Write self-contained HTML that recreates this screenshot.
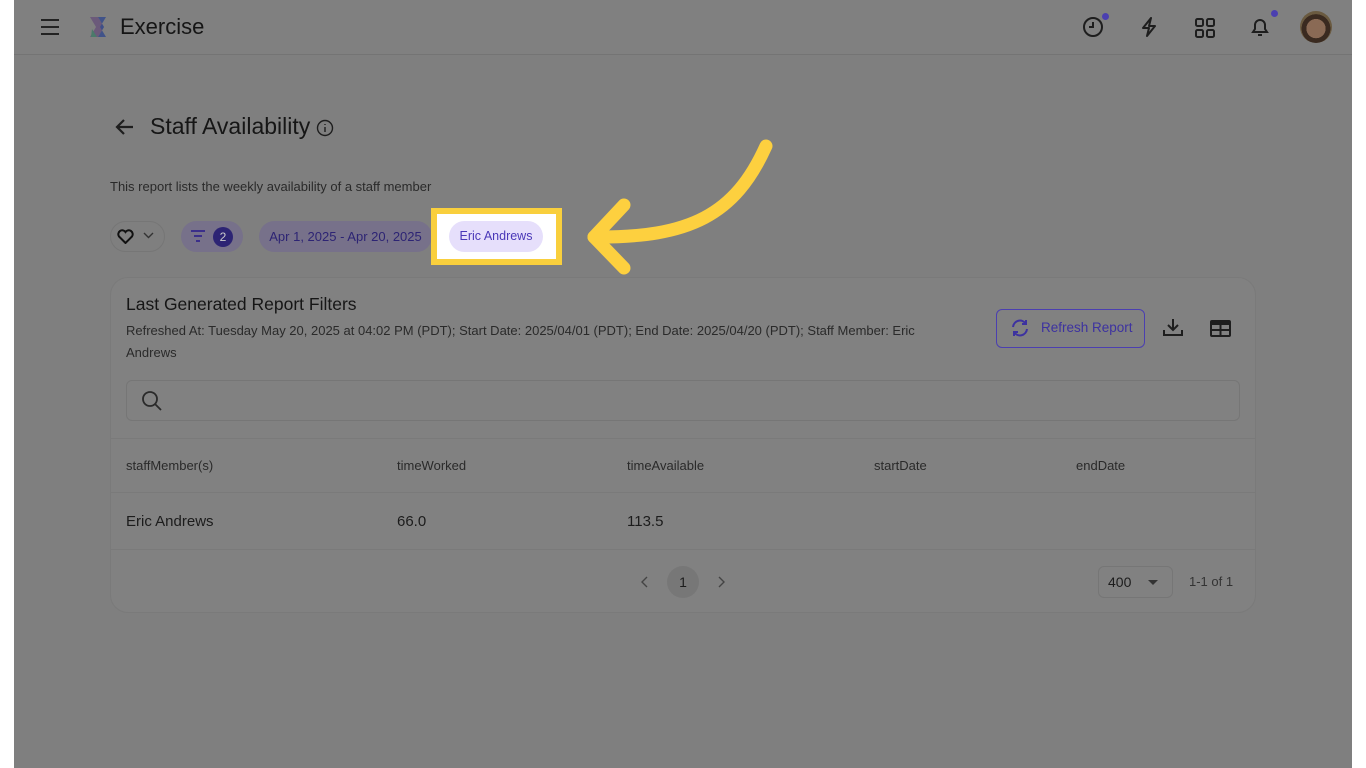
<!DOCTYPE html>
<html><head><meta charset="utf-8"><style>
*{margin:0;padding:0;box-sizing:border-box}
body{width:1366px;height:768px;background:#fff;font-family:"Liberation Sans",sans-serif;position:relative;overflow:hidden;color:#1c1c1c}
.page{position:absolute;left:14px;top:0;width:1338px;height:768px;background:#7f7f7f}
.a{position:absolute}
.top{left:14px;top:0;width:1338px;height:55px;border-bottom:1px solid #747474;background:#808080}
.card{left:110px;top:277px;width:1146px;height:336px;border:1px solid #7a7a7a;border-radius:18px;background:#818181}
.hl{background:#7a7a7a;height:1px}
.t{font-size:13px;color:#2a2a2a}
</style></head><body>
<div class="page"></div>
<div class="a top"></div>
<div class="a" style="left:41px;top:19px;width:18px;height:2px;background:#222"></div>
<div class="a" style="left:41px;top:26px;width:18px;height:2px;background:#222"></div>
<div class="a" style="left:41px;top:33px;width:18px;height:2px;background:#222"></div>
<svg class="a" style="left:88px;top:15px" width="24" height="24" viewBox="0 0 24 24"><path d="M2 2h8l6 10-6 10H2l6-10z" fill="#6b5a7a"/><path d="M10 2h8l-6 10 6 10h-8l6-10z" fill="#3a4e8a" opacity=".9"/><path d="M4 14l5 8h-6z" fill="#4a7a6a"/></svg>
<div class="a" style="left:120px;top:14px;font-size:22px;color:#151515">Exercise</div>
<svg class="a" style="left:1082px;top:16px" width="22" height="22" viewBox="0 0 22 22" fill="none" stroke="#1e1e1e" stroke-width="2"><circle cx="11" cy="11" r="9"/><path d="M11 6v5H7"/></svg>
<div class="a" style="left:1102px;top:13px;width:7px;height:7px;border-radius:50%;background:#4b3fb0"></div>
<svg class="a" style="left:1139px;top:16px" width="20" height="22" viewBox="0 0 20 22" fill="none" stroke="#1e1e1e" stroke-width="2" stroke-linejoin="round"><path d="M12 2L4 12h6l-2 8 8-10h-6z"/></svg>
<svg class="a" style="left:1195px;top:18px" width="20" height="20" viewBox="0 0 20 20" fill="none" stroke="#1e1e1e" stroke-width="2"><rect x="1" y="1" width="7" height="7" rx="1.5"/><rect x="12" y="1" width="7" height="7" rx="1.5"/><rect x="1" y="12" width="7" height="7" rx="1.5"/><rect x="12" y="12" width="7" height="7" rx="1.5"/></svg>
<svg class="a" style="left:1250px;top:16px" width="20" height="22" viewBox="0 0 20 22" fill="none" stroke="#1e1e1e" stroke-width="2"><path d="M3 16h14l-2-3V9a5 5 0 0 0-10 0v4z"/><path d="M8 19h4"/></svg>
<div class="a" style="left:1271px;top:10px;width:7px;height:7px;border-radius:50%;background:#4b3fb0"></div>
<div class="a" style="left:1300px;top:11px;width:32px;height:32px;border-radius:50%;background:radial-gradient(circle at 50% 55%,#8a6a55 0 40%,#3a2a20 41% 60%,#6a5a40 61%)"></div>
<svg class="a" style="left:115px;top:118px" width="20" height="18" viewBox="0 0 20 18" fill="none" stroke="#1e1e1e" stroke-width="2.2"><path d="M18 9H3M9 2L2 9l7 7"/></svg>
<div class="a" style="left:150px;top:113px;font-size:23px;color:#161616">Staff Availability</div>
<svg class="a" style="left:316px;top:119px" width="18" height="18" viewBox="0 0 18 18" fill="none" stroke="#1e1e1e" stroke-width="1.4"><circle cx="9" cy="9" r="7.5"/><path d="M9 8v5M9 5v1"/></svg>
<div class="a t" style="left:110px;top:179px">This report lists the weekly availability of a staff member</div>
<div class="a" style="left:110px;top:221px;width:55px;height:31px;border:1px solid #767676;border-radius:16px"></div>
<svg class="a" style="left:117px;top:229px" width="17" height="15" viewBox="0 0 17 15" fill="none" stroke="#111" stroke-width="2"><path d="M8.5 14L2 7.5A3.5 3.5 0 0 1 8.5 3a3.5 3.5 0 0 1 6.5 4.5z"/></svg>
<svg class="a" style="left:143px;top:232px" width="11" height="7" viewBox="0 0 11 7" fill="none" stroke="#333" stroke-width="1.4"><path d="M1 1l4.5 4.5L10 1"/></svg>
<div class="a" style="left:181px;top:221px;width:62px;height:31px;border-radius:16px;background:#77718a"></div>
<div class="a" style="left:191px;top:230px;width:14px;height:2px;background:#3b2f8a"></div>
<div class="a" style="left:194px;top:235px;width:8px;height:2px;background:#3b2f8a"></div>
<div class="a" style="left:196px;top:240px;width:4px;height:2px;background:#3b2f8a"></div>
<div class="a" style="left:213px;top:227px;width:20px;height:20px;border-radius:50%;background:#2d2474;color:#ccc;font-size:12px;text-align:center;line-height:20px">2</div>
<div class="a" style="left:259px;top:221px;width:173px;height:31px;border-radius:16px;background:#77718a;color:#2d2474;font-size:13px;line-height:31px;text-align:center">Apr 1, 2025 - Apr 20, 2025</div>
<div class="a" style="left:431px;top:208px;width:131px;height:57px;border:6px solid #f9cf3d;background:#fff"></div>
<div class="a" style="left:449px;top:221px;width:94px;height:31px;border-radius:16px;background:#e6dffb;color:#4a38b8;font-size:12.5px;line-height:31px;text-align:center">Eric Andrews</div>
<svg class="a" style="left:575px;top:130px" width="210" height="155" viewBox="575 130 210 155" fill="none" stroke="#fdd03f" stroke-width="13" stroke-linecap="round" stroke-linejoin="round"><path d="M766 146C735 215 690 238 594 237"/><path d="M624 205L594 237L624 268"/></svg>
<div class="a card"></div>
<div class="a" style="left:126px;top:294px;font-size:17.5px;color:#161616">Last Generated Report Filters</div>
<div class="a t" style="left:126px;top:320px;width:840px;line-height:22px">Refreshed At: Tuesday May 20, 2025 at 04:02 PM (PDT); Start Date: 2025/04/01 (PDT); End Date: 2025/04/20 (PDT); Staff Member: Eric Andrews</div>
<div class="a" style="left:996px;top:309px;width:149px;height:39px;border:1.5px solid #4b3fb0;border-radius:6px;color:#3d32a0;font-size:13.5px;line-height:36px;padding-left:44px">Refresh Report</div>
<svg class="a" style="left:1010px;top:318px" width="20" height="20" viewBox="0 0 20 20" fill="none" stroke="#3d32a0" stroke-width="2"><path d="M3 9a7 7 0 0 1 13-3M17 11a7 7 0 0 1-13 3M16 2v4h-4M4 18v-4h4"/></svg>
<svg class="a" style="left:1162px;top:318px" width="22" height="20" viewBox="0 0 22 20" fill="none" stroke="#1e1e1e" stroke-width="2"><path d="M11 1v11M6 7l5 5 5-5M2 12v5h18v-5"/></svg>
<svg class="a" style="left:1210px;top:320px" width="21" height="17" viewBox="0 0 21 17"><rect width="21" height="17" rx="2" fill="#1e1e1e"/><rect x="2" y="5" width="7.5" height="4" fill="#818181"/><rect x="11.5" y="5" width="7.5" height="4" fill="#818181"/><rect x="2" y="11" width="7.5" height="4" fill="#818181"/><rect x="11.5" y="11" width="7.5" height="4" fill="#818181"/></svg>
<div class="a" style="left:126px;top:380px;width:1114px;height:41px;border:1px solid #767676;border-radius:6px"></div>
<svg class="a" style="left:141px;top:390px" width="22" height="22" viewBox="0 0 22 22" fill="none" stroke="#2a2a2a" stroke-width="1.8"><circle cx="9" cy="9" r="7"/><path d="M14 14l6 6"/></svg>
<div class="a hl" style="left:111px;top:438px;width:1144px"></div>
<div class="a t" style="left:126px;top:458px">staffMember(s)</div>
<div class="a t" style="left:397px;top:458px">timeWorked</div>
<div class="a t" style="left:627px;top:458px">timeAvailable</div>
<div class="a t" style="left:874px;top:458px">startDate</div>
<div class="a t" style="left:1076px;top:458px">endDate</div>
<div class="a hl" style="left:111px;top:492px;width:1144px"></div>
<div class="a" style="left:126px;top:513px;font-size:15px">Eric Andrews</div>
<div class="a" style="left:397px;top:513px;font-size:15px">66.0</div>
<div class="a" style="left:627px;top:513px;font-size:15px">113.5</div>
<div class="a hl" style="left:111px;top:549px;width:1144px"></div>
<svg class="a" style="left:641px;top:576px" width="8" height="12" viewBox="0 0 8 12" fill="none" stroke="#444" stroke-width="1.4"><path d="M6 1L1 6l5 5"/></svg>
<div class="a" style="left:667px;top:566px;width:32px;height:32px;border-radius:50%;background:#777;text-align:center;line-height:32px;font-size:14px">1</div>
<svg class="a" style="left:717px;top:576px" width="8" height="12" viewBox="0 0 8 12" fill="none" stroke="#444" stroke-width="1.4"><path d="M2 1l5 5-5 5"/></svg>
<div class="a" style="left:1098px;top:566px;width:75px;height:32px;border:1px solid #767676;border-radius:6px;font-size:14px;line-height:30px;padding-left:9px">400</div>
<div class="a" style="left:1148px;top:580px;border:5px solid transparent;border-top:5px solid #333;border-bottom:0"></div>
<div class="a t" style="left:1189px;top:574px;color:#333">1-1 of 1</div>
</body></html>
